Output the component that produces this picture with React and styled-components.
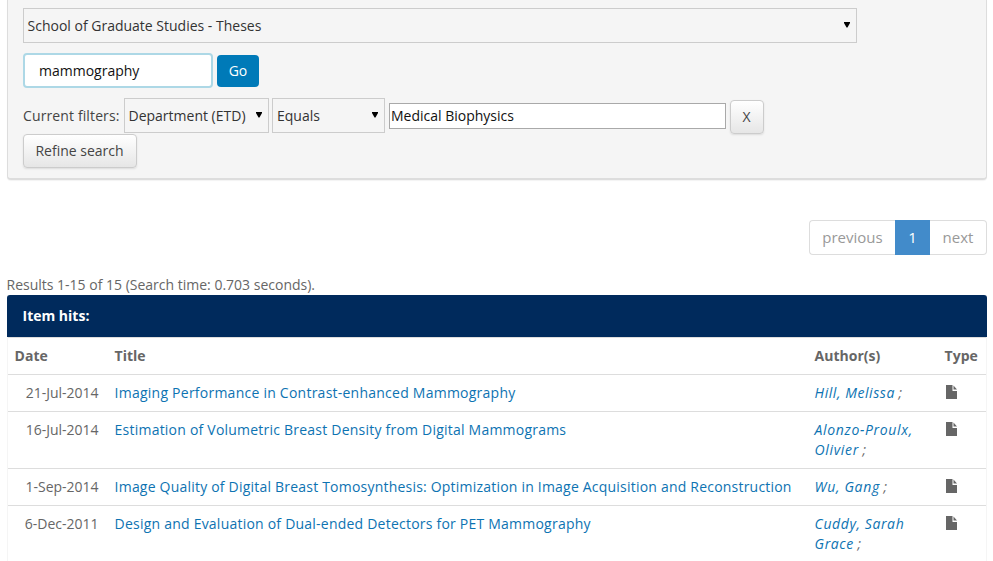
import React from "react";
import styled, { createGlobalStyle, css } from "styled-components";

const GlobalStyle = createGlobalStyle`
  * { box-sizing: border-box; }
  html, body { margin: 0; overflow: hidden; }
  body {
    height: 561px;
    background: #fff;
    color: #666;
    font: 14px/20px "Open Sans", "Noto Sans", sans-serif;
  }
  button, input { font: inherit; }
`;

const Page = styled.main`
  padding: 0 6px 0 7px;
`;

const SearchPanel = styled.form`
  height: 180px;
  padding: 8px 15px 0;
  background: #f5f5f5;
  border: solid #ddd;
  border-width: 0 1px 2px;
  border-radius: 0 0 4px 4px;
  box-shadow: 0 1px 1px rgba(0, 0, 0, 0.05);
`;

const SelectBox = styled.div`
  display: flex;
  align-items: center;
  justify-content: space-between;
  width: ${(p) => p.$width}px;
  height: 35px;
  padding: 0 6px 0 ${(p) => p.$inset}px;
  border: 1px solid #ccc;
  color: #333;
  white-space: nowrap;
`;

const Arrow = styled.svg`
  flex: none;
  width: 6px;
  height: 6px;
  margin-top: -1px;
  fill: #000;
`;

const QueryRow = styled.div`
  display: flex;
  align-items: center;
  gap: 4px;
  height: 35px;
  margin-top: 10px;
`;

const QueryInput = styled.input`
  width: 190px;
  height: 35px;
  padding: 0 14px;
  border: 2px solid #add8e6;
  border-radius: 4px;
  outline: 0;
  background: #fff;
  color: #111;
`;

const GoButton = styled.button`
  width: 42px;
  height: 32px;
  margin-top: 1px;
  padding: 0;
  border: 0;
  border-radius: 4px;
  background: #007ab8;
  color: #fff;
`;

const FilterRow = styled.div`
  display: flex;
  align-items: center;
  height: 35px;
  margin-top: 10px;
`;

const FilterLabel = styled.span`
  width: 101px;
  color: #444;
  letter-spacing: 0.12px;
  white-space: nowrap;
`;

const FilterInput = styled.input`
  width: 337px;
  height: 26px;
  margin: 0 4px;
  padding: 0 1px;
  border: 1px solid #a9a9a9;
  border-radius: 0;
  background: #fff;
  color: #111;
`;

const Gap = styled.span`
  width: 3px;
`;

const SoftButton = styled.button`
  display: block;
  width: ${(p) => p.$width}px;
  height: 34px;
  margin-top: ${(p) => p.$top}px;
  padding: 0 1px 0 0;
  border: 1px solid #ccc;
  border-radius: 4px;
  background: linear-gradient(#fff, #e6e6e6);
  box-shadow: 0 1px 2px rgba(0, 0, 0, 0.1);
  color: #444;
`;

const Pagination = styled.nav`
  display: flex;
  width: 178px;
  height: 35px;
  margin: 40px 0 0 auto;
  font-size: 15px;
`;

const PageItem = styled.span`
  display: flex;
  align-items: center;
  justify-content: center;
  width: ${(p) => p.$width}px;
  padding-bottom: 2px;
  border: 1px solid #ddd;
  color: #999;
  &:first-child { border-right: 0; border-radius: 4px 0 0 4px; }
  &:last-child { border-left: 0; border-radius: 0 4px 4px 0; }
  ${(p) => p.$active && css`
    border-color: #428bca;
    background: #428bca;
    color: #fff;
  `}
`;

const Summary = styled.p`
  margin: 20px 0 0 -0.5px;
`;

const Results = styled.section`
  border: solid #f5f5f5;
  border-width: 0 1px;
`;

const ResultsHeading = styled.h2`
  height: 42px;
  margin: 0 -1px;
  padding: 11px 15.5px;
  border-radius: 3px 3px 0 0;
  background: #002a5c;
  color: #fff;
  font-size: 14px;
  font-weight: 700;
  line-height: 20px;
`;

const Table = styled.table`
  width: 100%;
  border-collapse: collapse;
  table-layout: fixed;
  th, td {
    padding: 8px 6px 8px 6.6px;
    border-top: 1px solid #ddd;
    text-align: left;
    vertical-align: top;
  }
  td:first-child { padding-right: 9.4px; text-align: right; }
  th:last-child, td:last-child { padding-right: 0; }
`;

const Col = styled.col`
  width: ${(p) => p.$width}px;
`;

const TitleLink = styled.a`
  color: #0d73b2;
  letter-spacing: ${(p) => p.$tracking}px;
  white-space: nowrap;
`;

const AuthorLine = styled.em`
  display: block;
  white-space: nowrap;
`;

const AuthorLink = styled.a`
  color: #0d73b2;
  letter-spacing: ${(p) => p.$tracking}px;
`;

const FileIcon = styled.svg`
  display: block;
  width: 11px;
  height: 14px;
  margin: 2px 0 0 1px;
  fill: #666;
`;

const rows = [
  { date: "21-Jul-2014", title: "Imaging Performance in Contrast-enhanced Mammography", author: ["Hill, Melissa"], tracking: 0.24, authorTracking: 0.56 },
  { date: "16-Jul-2014", title: "Estimation of Volumetric Breast Density from Digital Mammograms", author: ["Alonzo-Proulx,", "Olivier"], tracking: 0.22, authorTracking: 0.66 },
  { date: "1-Sep-2014", title: "Image Quality of Digital Breast Tomosynthesis: Optimization in Image Acquisition and Reconstruction", author: ["Wu, Gang"], tracking: 0.208, authorTracking: 0.68 },
  { date: "6-Dec-2011", title: "Design and Evaluation of Dual-ended Detectors for PET Mammography", author: ["Cuddy, Sarah", "Grace"], tracking: 0.222, authorTracking: 0.6 },
];

function Select({ width, inset = 3.5, children }) {
  return (
    <SelectBox $width={width} $inset={inset}>
      {children}
      <Arrow viewBox="0 0 6 6"><path d="M0 0h6v1L3.5 5.5h-1L0 1z" /></Arrow>
    </SelectBox>
  );
}

export default function App() {
  return (
    <Page>
      <GlobalStyle />
      <SearchPanel>
        <Select width={834}>School of Graduate Studies - Theses</Select>
        <QueryRow>
          <QueryInput defaultValue="mammography" />
          <GoButton type="button">Go</GoButton>
        </QueryRow>
        <FilterRow>
          <FilterLabel>Current filters:</FilterLabel>
          <Select width={145}>Department (ETD)</Select>
          <Gap />
          <Select width={113} inset={4}>Equals</Select>
          <FilterInput defaultValue="Medical Biophysics" />
          <SoftButton type="button" $width={34} $top={3}>X</SoftButton>
        </FilterRow>
        <SoftButton type="button" $width={114} $top={1}>Refine search</SoftButton>
      </SearchPanel>
      <Pagination>
        <PageItem $width={86}>previous</PageItem>
        <PageItem $width={35} $active>1</PageItem>
        <PageItem $width={57}>next</PageItem>
      </Pagination>
      <Summary>Results 1-15 of 15 (Search time: 0.703 seconds).</Summary>
      <Results>
        <ResultsHeading>Item hits:</ResultsHeading>
        <Table>
          <colgroup>
            <Col $width={100} />
            <Col $width={700} />
            <Col $width={130} />
            <Col $width={48} />
          </colgroup>
          <thead>
            <tr><th>Date</th><th>Title</th><th>Author(s)</th><th>Type</th></tr>
          </thead>
          <tbody>
            {rows.map((row) => (
              <tr key={row.title}>
                <td>{row.date}</td>
                <td><TitleLink $tracking={row.tracking}>{row.title}</TitleLink></td>
                <td>
                  {row.author.map((line, i) => (
                    <AuthorLine key={line}>
                      <AuthorLink $tracking={row.authorTracking}>{line}</AuthorLink>
                      {i === row.author.length - 1 && " ;"}
                    </AuthorLine>
                  ))}
                </td>
                <td>
                  <FileIcon viewBox="0 0 11 14">
                    <path d="M0 0h6.5v6H11v8H0zM7.5 .5 11 4.5H7.5z" />
                  </FileIcon>
                </td>
              </tr>
            ))}
          </tbody>
        </Table>
      </Results>
    </Page>
  );
}
